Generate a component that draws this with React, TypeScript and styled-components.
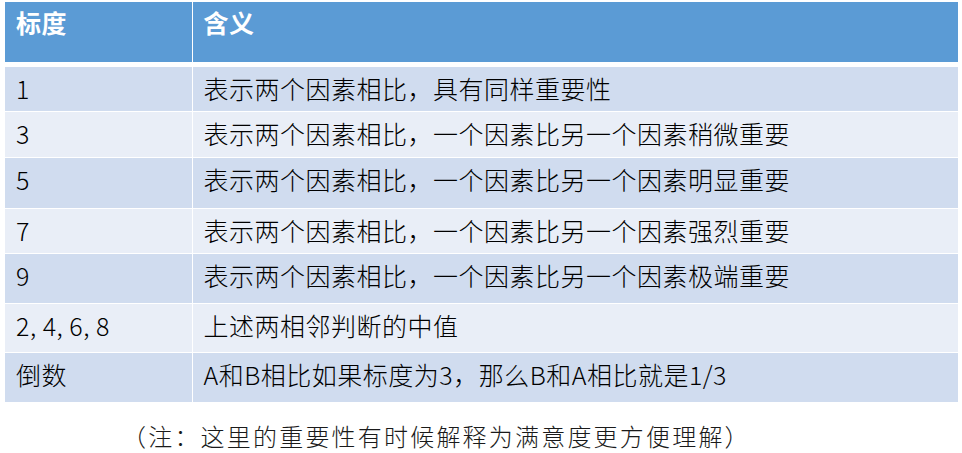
import styled, {createGlobalStyle} from 'styled-components';

const GlobalStyle = createGlobalStyle`
  html, body {
    margin: 0;
    padding: 0;
    background: #ffffff;
  }
  body {
    font-family: "Noto Sans CJK SC", "Noto Sans", sans-serif;
    color: #000;
  }
`;

type Row = { scale: string; meaning: string; height: number };

const rows: Row[] = [
    {scale: '1', meaning: '表示两个因素相比，具有同样重要性', height: 47},
    {scale: '3', meaning: '表示两个因素相比，一个因素比另一个因素稍微重要', height: 46},
    {scale: '5', meaning: '表示两个因素相比，一个因素比另一个因素明显重要', height: 51},
    {scale: '7', meaning: '表示两个因素相比，一个因素比另一个因素强烈重要', height: 45},
    {scale: '9', meaning: '表示两个因素相比，一个因素比另一个因素极端重要', height: 50},
    {scale: '2, 4, 6, 8', meaning: '上述两相邻判断的中值', height: 49},
    {scale: '倒数', meaning: 'A和B相比如果标度为3，那么B和A相比就是1/3', height: 50},
];

export default function App() {
    return (
        <>
            <GlobalStyle/>
            <Page>
                <Table>
                    <colgroup>
                        <col style={{width: 187}}/>
                        <col/>
                    </colgroup>
                    <thead>
                    <tr>
                        <HeadCell>标度</HeadCell>
                        <HeadCell>含义</HeadCell>
                    </tr>
                    </thead>
                    <tbody>
                    {rows.map((row, i) => (
                        <BodyRow key={row.scale} $banded={i % 2 === 0} $height={row.height}>
                            <Cell>{row.scale}</Cell>
                            <Cell>{row.meaning}</Cell>
                        </BodyRow>
                    ))}
                    </tbody>
                </Table>
                <Note>（注：这里的重要性有时候解释为满意度更方便理解）</Note>
            </Page>
        </>
    );
}

const Page = styled.div`
  padding: 2px 4px 0 5px;
  width: 953px;
`;

const Table = styled.table`
  width: 953px;
  border-collapse: collapse;
  table-layout: fixed;
  font-size: 25px;
  font-weight: 300;
  letter-spacing: 0.5px;
`;

const HeadCell = styled.th`
  background: #5b9bd5;
  color: #ffffff;
  font-weight: bold;
  text-align: left;
  vertical-align: top;
  height: 62px;
  padding: 3px 11px 0 11px;
  line-height: 34px;
  box-sizing: border-box;
  border-left: 1px solid #ffffff;
  border-bottom: 5px solid #ffffff;

  &:first-child {
    border-left: none;
  }
`;

const BodyRow = styled.tr<{ $banded: boolean; $height: number }>`
  background: ${({$banded}) => ($banded ? '#d0dcef' : '#e9eef7')};
  height: ${({$height}) => $height}px;
`;

const Cell = styled.td`
  padding: 4px 11px 0 11px;
  line-height: 34px;
  vertical-align: top;
  white-space: nowrap;
  border-left: 1px solid #ffffff;
  border-top: 1px solid #ffffff;

  &:first-child {
    border-left: none;
  }
`;

const Note = styled.div`
  margin: 18px 0 0 117px;
  font-size: 24px;
  font-weight: 300;
  letter-spacing: 2.2px;
  line-height: 32px;
  color: #1a1a1a;
`;
